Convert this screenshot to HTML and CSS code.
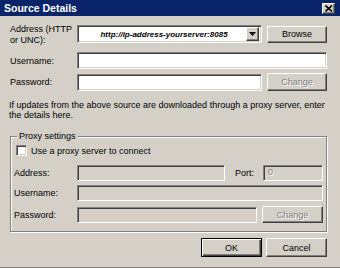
FILE: index.html
```html
<!DOCTYPE html>
<html>
<head>
<meta charset="utf-8">
<link rel="stylesheet" href="styles.css">
</head>
<body>
<div class="dialog">
  <div class="titlebar">
    <span class="title">Source Details</span>
    <span class="close">
      <svg width="8" height="7" viewBox="0 0 8 7"><path d="M0.5 0.5 L7 6.5 M7 0.5 L0.5 6.5" stroke="#000" stroke-width="1.6"/></svg>
    </span>
  </div>
  <div class="content">
    <div class="row row-address">
      <label class="lbl lbl-wrap">Address (HTTP<br>or UNC):</label>
      <div class="field combo">
        <span class="combo-text">http://ip-address-yourserver:8085</span>
        <span class="combo-btn"><svg width="7" height="4" viewBox="0 0 7 4"><path d="M0 0 H7 L3.5 4 Z" fill="#000"/></svg></span>
      </div>
      <button class="btn">Browse</button>
    </div>
    <div class="row row-user">
      <label class="lbl">Username:</label>
      <div class="field grow"></div>
    </div>
    <div class="row row-pass">
      <label class="lbl">Password:</label>
      <div class="field grow"></div>
      <button class="btn disabled">Change</button>
    </div>
    <p class="note">If updates from the above source are downloaded through a proxy server, enter the details here.</p>
    <fieldset class="group">
      <legend>Proxy settings</legend>
      <div class="check-row">
        <span class="checkbox"></span>
        <span>Use a proxy server to connect</span>
      </div>
      <div class="grow-row g-address">
        <label class="glbl">Address:</label>
        <div class="field off addr"></div>
        <label class="port-lbl">Port:</label>
        <div class="field off port"><span class="dis-text">0</span></div>
      </div>
      <div class="grow-row g-user">
        <label class="glbl">Username:</label>
        <div class="field off grow"></div>
      </div>
      <div class="grow-row g-pass">
        <label class="glbl">Password:</label>
        <div class="field off grow"></div>
        <button class="btn disabled gbtn">Change</button>
      </div>
    </fieldset>
    <div class="actions">
      <button class="btn default">OK</button>
      <button class="btn">Cancel</button>
    </div>
  </div>
</div>
</body>
</html>
```

FILE: styles.css
```css
* { box-sizing: border-box; }
html, body { margin: 0; padding: 0; background: #d4d0c8; }
.dialog {
  width: 340px;
  height: 268px;
  background: #d4d0c8;
  font-family: "Liberation Sans", Arial, sans-serif;
  font-size: 9px;
  color: #000;
  overflow: hidden;
  border-bottom: 1px solid #808080;
}
.titlebar {
  height: 16px;
  background: #0a246a;
  display: flex;
  align-items: center;
  justify-content: space-between;
  padding: 0 5px 0 4px;
}
.title {
  color: #fff;
  font-weight: bold;
  font-size: 10.5px;
}
.close {
  width: 13px;
  height: 11px;
  background: #d4d0c8;
  border: 1px solid;
  border-color: #fff #404040 #404040 #fff;
  box-shadow: inset -1px -1px #808080;
  display: flex;
  align-items: center;
  justify-content: center;
}
.content { padding: 7px 13px 0 10px; }
.row { display: flex; align-items: center; }
.lbl { width: 67px; flex: none; }
.lbl-wrap { line-height: 11px; white-space: nowrap; align-self: flex-start; margin-top: 1px; }
.field {
  height: 17px;
  background: #fff;
  border: 1px solid;
  border-color: #808080 #fff #fff #808080;
  box-shadow: inset 1px 1px #404040, inset -1px -1px #d4d0c8;
}
.field.off { background: #d4d0c8; }
.grow { flex: 1; }
.combo {
  width: 185px;
  height: 18px;
  display: flex;
  align-items: center;
  padding: 2px;
}
.combo-text {
  flex: 1;
  text-align: center;
  font-weight: bold;
  font-style: italic;
  font-size: 8px;
  padding-left: 2px;
}
.combo-btn {
  width: 13px;
  height: 14px;
  background: #d4d0c8;
  border: 1px solid;
  border-color: #fff #404040 #404040 #fff;
  box-shadow: inset -1px -1px #808080;
  display: flex;
  align-items: center;
  justify-content: center;
}
.btn {
  font: inherit;
  color: #000;
  background: #d4d0c8;
  width: 60px;
  height: 17px;
  padding: 0;
  margin-left: 5px;
  border: 1px solid;
  border-color: #fff #404040 #404040 #fff;
  box-shadow: inset -1px -1px #808080;
}
.btn.disabled { color: #808080; text-shadow: 1px 1px #fff; }
.row-address { height: 22px; margin-bottom: 7px; }
.row-user { margin-bottom: 4px; }
.row-pass .btn { height: 18px; }
.note { margin: 9px 0 0 -1px; line-height: 10px; }
.group {
  margin: 11px 0 0 0;
  padding: 0 3px 0 3px;
  height: 101px;
  border: 1px solid #808080;
  box-shadow: inset 1px 1px #fff, 1px 1px #fff;
}
.group legend {
  padding: 0 2px;
  margin-left: 3px;
  background: #d4d0c8;
  line-height: 10px;
}
.check-row { display: flex; align-items: center; gap: 4px; margin: 4px 0 0 2px; }
.checkbox {
  width: 11px;
  height: 11px;
  background: #fff;
  border: 1px solid;
  border-color: #808080 #fff #fff #808080;
  box-shadow: inset 1px 1px #404040, inset -1px -1px #d4d0c8;
}
.grow-row { display: flex; align-items: center; }
.glbl { width: 63px; flex: none; }
.g-address { margin-top: 9px; }
.g-user { margin-top: 4px; }
.g-pass { margin-top: 5px; }
.addr { width: 148px; height: 16px; }
.port-lbl { margin-left: 10px; width: 28px; }
.port { width: 60px; height: 16px; padding: 1px 0 0 4px; }
.dis-text { color: #808080; text-shadow: 1px 1px #fff; }
.g-user .field, .g-pass .field { height: 16px; }
.gbtn { margin-left: 5px; width: 61px; }
.actions { display: flex; justify-content: flex-end; margin-top: 6px; gap: 0; }
.actions .btn { width: 61px; height: 19px; margin-left: 4px; }
.btn.default {
  border: 1px solid #000;
  box-shadow: inset 1px 1px #fff, inset -1px -1px #404040, inset -2px -2px #808080;
}
```
